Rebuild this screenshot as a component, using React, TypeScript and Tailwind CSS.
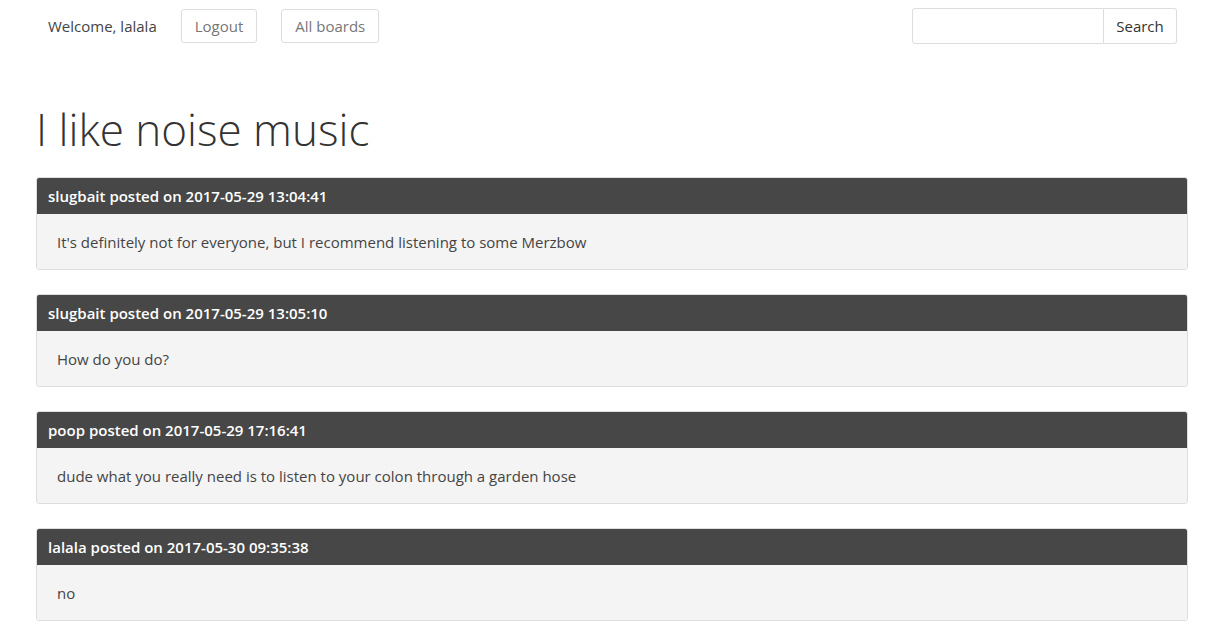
const posts = [
  { author: 'slugbait', at: '2017-05-29 13:04:41', body: "It's definitely not for everyone, but I recommend listening to some Merzbow" },
  { author: 'slugbait', at: '2017-05-29 13:05:10', body: 'How do you do?' },
  { author: 'poop', at: '2017-05-29 17:16:41', body: 'dude what you really need is to listen to your colon through a garden hose' },
  { author: 'lalala', at: '2017-05-30 09:35:38', body: 'no' },
];

export default function App() {
  return (
    <div className="min-h-screen bg-white font-['Open_Sans',sans-serif] text-[#333]">
      <nav className="flex h-[52px] items-start justify-between pl-12 pr-[53px] pt-2">
        <div className="flex items-center">
          <span className="mt-[1px] flex h-[34px] items-center text-[15px] text-[#444]">Welcome, lalala</span>
          <button className="ml-6 mt-[1px] h-[34px] rounded-[3px] border border-[#ddd] px-[13px] text-[15px] text-[#777]">
            Logout
          </button>
          <button className="ml-6 mt-[1px] h-[34px] rounded-[3px] border border-[#ddd] px-[13px] text-[15px] text-[#777]">
            All boards
          </button>
        </div>
        <div className="flex h-9">
          <input className="w-[192px] rounded-l-[3px] border border-[#ddd] bg-white outline-none" />
          <button className="w-[73px] rounded-r-[3px] border border-l-0 border-[#ddd] text-[15px] text-[#333]">
            Search
          </button>
        </div>
      </nav>

      <main className="pl-9 pr-[42px]">
        <h1 className="mt-[47px] mb-[18px] text-[44px] leading-[60px] font-light text-[#333]">I like noise music</h1>
        <div className="flex flex-col gap-[24px]">
          {posts.map((p, i) => (
            <div key={i} className="overflow-hidden rounded-[3px] border border-[#ddd]">
              <div className="flex h-[36px] items-center bg-[#474747] px-[11px] pt-[1px] text-[15px] font-semibold text-white">
                {p.author} posted on {p.at}
              </div>
              <div className="flex h-[55px] items-center bg-[#f4f4f4] px-5 pt-[1px] text-[15px] text-[#444]">{p.body}</div>
            </div>
          ))}
        </div>
      </main>
    </div>
  );
}
